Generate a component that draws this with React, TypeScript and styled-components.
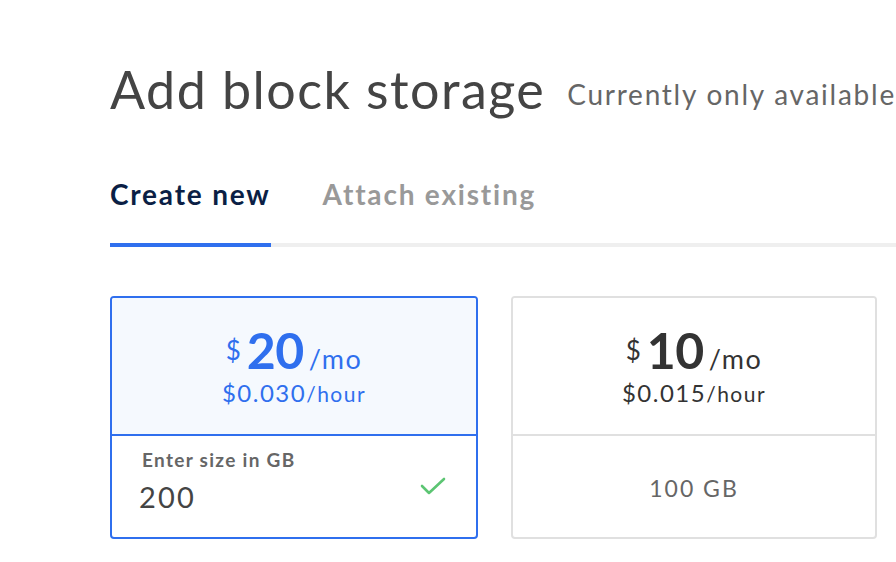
import React from "react";
import styled, { createGlobalStyle } from "styled-components";

const Global = createGlobalStyle`
  html, body { margin: 0; padding: 0; background: #fff; }
  body { font-family: "Lato", "Open Sans", sans-serif; -webkit-font-smoothing: antialiased; }
  * { box-sizing: border-box; }
`;

const BLUE = "#2f6fee";

const Page = styled.div`
  width: 896px;
  height: 562px;
  overflow: hidden;
  padding: 57px 0 0 110px;
`;

const TitleRow = styled.div`
  display: flex;
  align-items: flex-start;
  gap: 22px;
  white-space: nowrap;
`;

const Title = styled.h1`
  margin: 0;
  font-size: 52px;
  line-height: 64px;
  font-weight: 400;
  color: #444;
  letter-spacing: 1.45px;
`;

const Subtitle = styled.span`
  font-size: 28px;
  line-height: 32px;
  margin-top: 21px;
  color: #666;
  letter-spacing: 1.75px;
`;

const Tabs = styled.div`
  display: flex;
  margin-top: 55px;
  border-bottom: 4px solid #efefef;
`;

const Tab = styled.div<{ $active?: boolean }>`
  font-size: 28px;
  font-weight: 700;
  line-height: 36px;
  letter-spacing: 1.8px;
  padding-bottom: 31px;
  margin-right: 52px;
  margin-bottom: -4px;
  color: ${(p) => (p.$active ? "#0b1f45" : "#999")};
  border-bottom: 4px solid ${(p) => (p.$active ? BLUE : "transparent")};
  white-space: nowrap;
`;

const Cards = styled.div`
  display: flex;
  gap: 33px;
  margin-top: 49px;
`;

const Card = styled.div<{ $selected?: boolean }>`
  width: ${(p) => (p.$selected ? 368 : 366)}px;
  height: 243px;
  border-radius: 4px;
  border: 2px solid ${(p) => (p.$selected ? BLUE : "#e0e0e0")};
  display: flex;
  flex-direction: column;
  overflow: hidden;
  color: ${(p) => (p.$selected ? BLUE : "#333")};
`;

const PriceBox = styled.div<{ $selected?: boolean }>`
  height: 138px;
  background: ${(p) => (p.$selected ? "#f5f9fe" : "#fff")};
  border-bottom: 2px solid ${(p) => (p.$selected ? BLUE : "#e0e0e0")};
  display: flex;
  flex-direction: column;
  align-items: center;
  padding-top: 27px;
`;

const Monthly = styled.div`
  display: flex;
  align-items: baseline;
  line-height: 50px;
`;

const Dollar = styled.span`
  font-size: 26px;
  align-self: flex-start;
  margin-right: 6px;
`;

const Amount = styled.span`
  font-size: 50px;
  font-weight: 700;
  letter-spacing: -0.5px;
`;

const Per = styled.span`
  font-size: 27px;
  margin-left: 5px;
  letter-spacing: 1.5px;
`;

const Hourly = styled.div`
  font-size: 24px;
  line-height: 30px;
  margin-top: -6px;
  letter-spacing: 1.5px;
`;

const HourUnit = styled.span`
  font-size: 21px;
`;

const SizeBox = styled.div`
  flex: 1;
  display: flex;
  align-items: flex-start;
  justify-content: space-between;
  padding: 13px 30px 0 27px;
`;

const SizeField = styled.div`
  display: flex;
  flex-direction: column;
`;

const FieldLabel = styled.label`
  font-size: 19px;
  font-weight: 700;
  color: #666;
  margin-left: 3px;
  line-height: 22px;
  letter-spacing: 1.3px;
`;

const FieldValue = styled.div`
  font-size: 29px;
  color: #444;
  line-height: 34px;
  margin-top: 9px;
  letter-spacing: 2.2px;
`;

const Check = styled.svg`
  width: 26px;
  height: 18px;
  margin-top: 28px;
`;

const FixedSize = styled.div`
  flex: 1;
  display: flex;
  align-items: center;
  justify-content: center;
  font-size: 23px;
  letter-spacing: 2px;
  color: #666;
  padding-top: 2px;
`;

export default function App() {
  return (
    <>
      <Global />
      <Page>
        <TitleRow>
          <Title>Add block storage</Title>
          <Subtitle>Currently only available</Subtitle>
        </TitleRow>
        <Tabs>
          <Tab $active>Create new</Tab>
          <Tab>Attach existing</Tab>
        </Tabs>
        <Cards>
          <Card $selected>
            <PriceBox $selected>
              <Monthly>
                <Dollar>$</Dollar>
                <Amount>20</Amount>
                <Per>/mo</Per>
              </Monthly>
              <Hourly>
                $0.030<HourUnit>/hour</HourUnit>
              </Hourly>
            </PriceBox>
            <SizeBox>
              <SizeField>
                <FieldLabel>Enter size in GB</FieldLabel>
                <FieldValue>200</FieldValue>
              </SizeField>
              <Check viewBox="0 0 26 18" fill="none">
                <path d="M2 9 L9 16 L24 2" stroke="#5cc573" strokeWidth="2.6" strokeLinecap="round" strokeLinejoin="round" />
              </Check>
            </SizeBox>
          </Card>
          <Card>
            <PriceBox>
              <Monthly>
                <Dollar>$</Dollar>
                <Amount>10</Amount>
                <Per>/mo</Per>
              </Monthly>
              <Hourly>
                $0.015<HourUnit>/hour</HourUnit>
              </Hourly>
            </PriceBox>
            <FixedSize>100 GB</FixedSize>
          </Card>
        </Cards>
      </Page>
    </>
  );
}
